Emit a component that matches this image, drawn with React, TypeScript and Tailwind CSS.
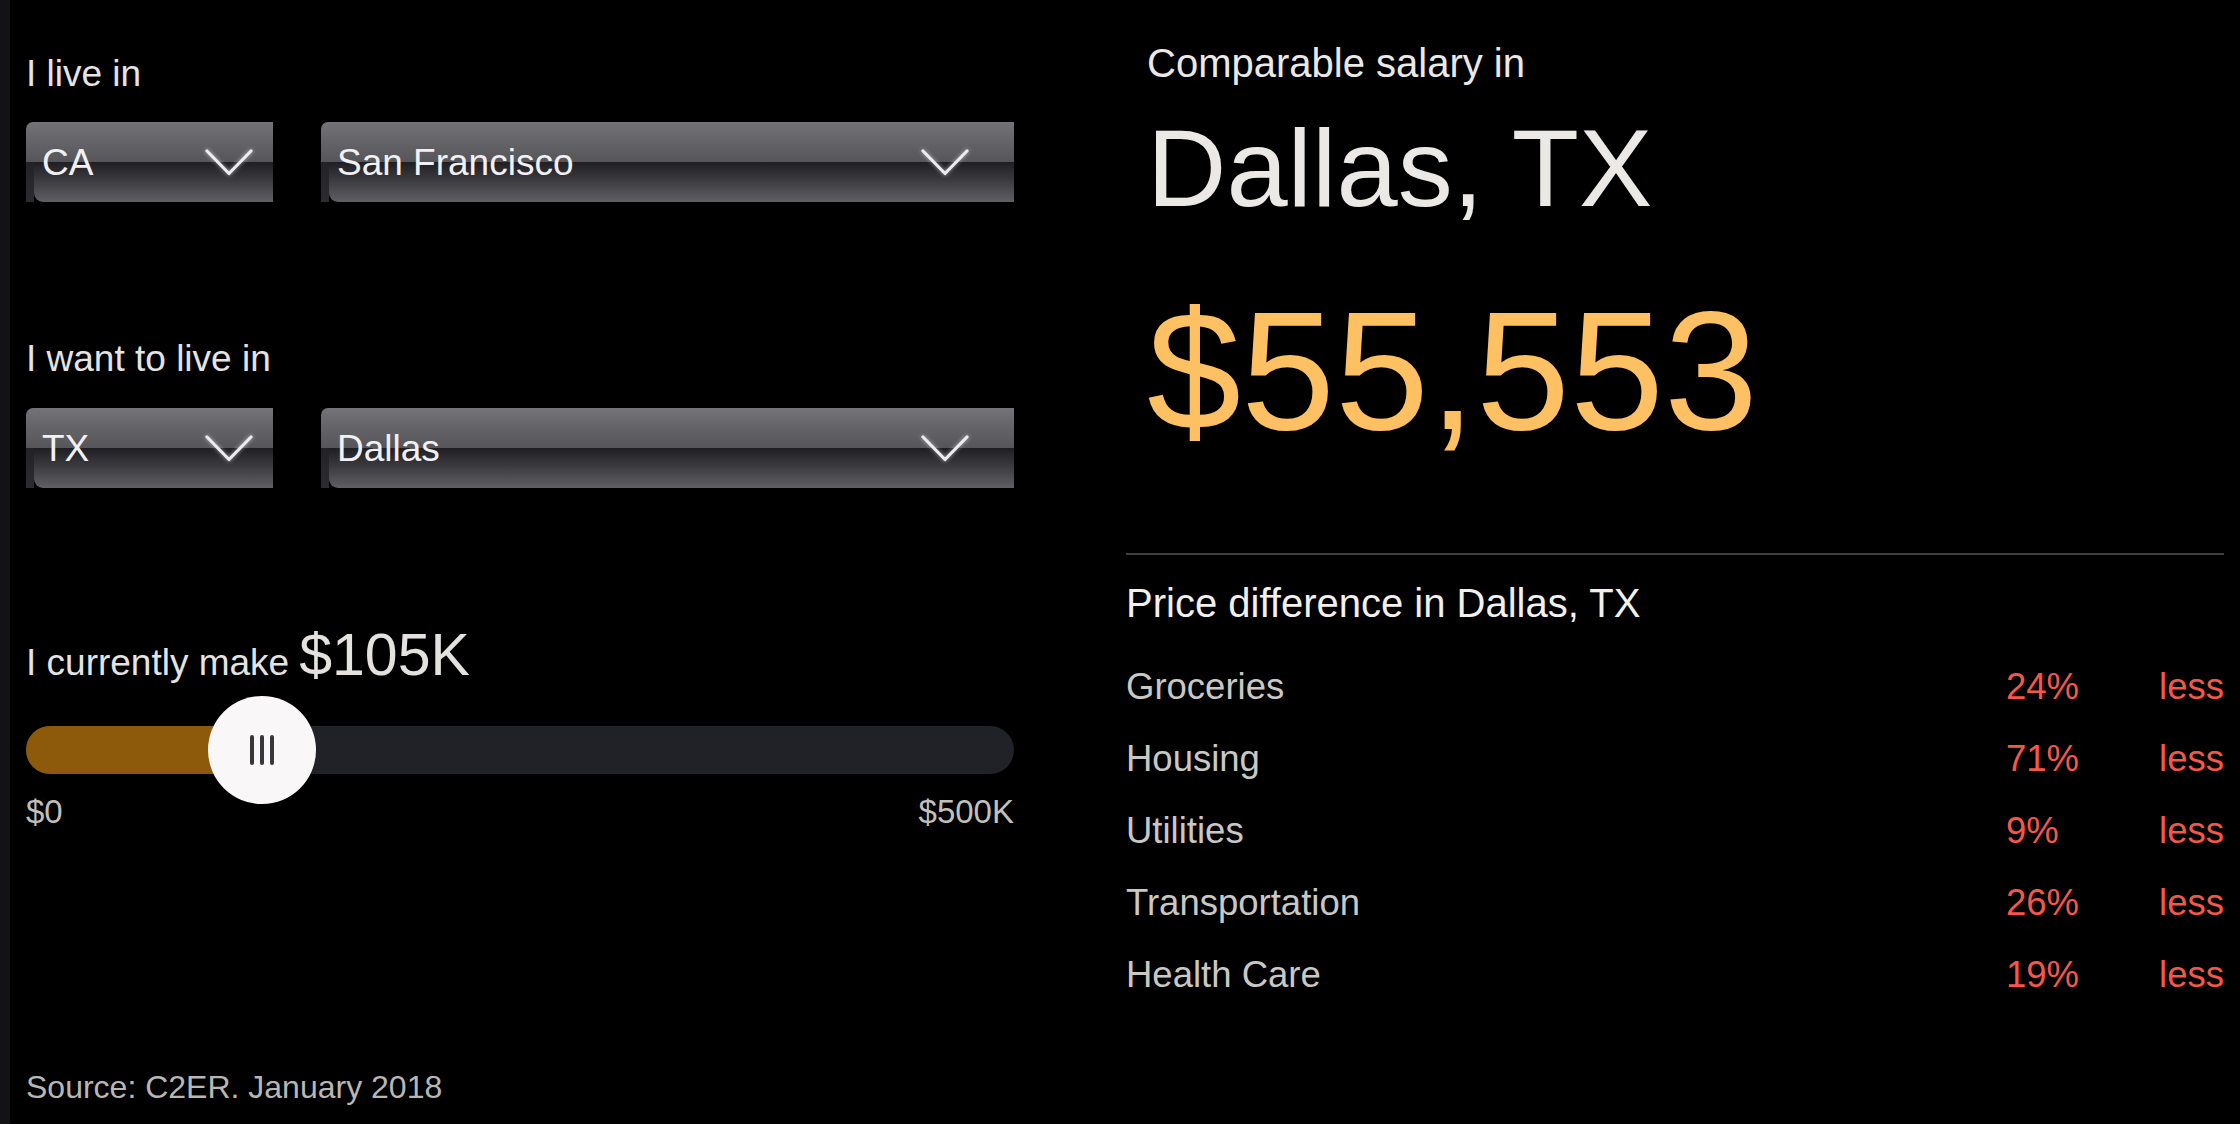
import React from "react";

type Row = { label: string; pct: string };

const ROWS: Row[] = [
  { label: "Groceries", pct: "24%" },
  { label: "Housing", pct: "71%" },
  { label: "Utilities", pct: "9%" },
  { label: "Transportation", pct: "26%" },
  { label: "Health Care", pct: "19%" },
];

const SALARY = 105;
const SALARY_MAX = 500;
const TRACK_W = 988;
const THUMB = 108;

function Chevron() {
  return (
    <svg
      width="48"
      height="27"
      viewBox="0 0 48 27"
      className="drop-shadow-[0_0_2px_rgba(255,255,255,0.55)]"
    >
      <polyline
        points="2,2 24,24.5 46,2"
        fill="none"
        stroke="#ecebee"
        strokeWidth="3.2"
        strokeLinecap="round"
        strokeLinejoin="round"
      />
    </svg>
  );
}

function Dropdown({
  value,
  width,
  chevronRight,
}: {
  value: string;
  width: string;
  chevronRight: string;
}) {
  return (
    <div className={`grid h-[80px] ${width}`}>
      {/* glossy two-tone background */}
      <div className="[grid-area:1/1] flex flex-col overflow-hidden rounded-tl-[7px]">
        <div className="h-[40px] bg-[linear-gradient(to_bottom,#747378,#67666b_40%,#56565a)]" />
        <div className="flex h-[40px]">
          <div className="w-[8px] bg-[linear-gradient(to_bottom,#232327,#2c2c30)]" />
          <div className="flex-1 rounded-bl-[9px] bg-[linear-gradient(to_bottom,#1f1f23,#3a3a3f_45%,#5f5f64)]" />
        </div>
      </div>
      <div className="[grid-area:1/1] flex items-center justify-between pl-[16px]">
        <span className="text-[37px] leading-none text-[#f1f0f2]">{value}</span>
        <span className={`flex ${chevronRight}`}>
          <Chevron />
        </span>
      </div>
    </div>
  );
}

function Slider() {
  const frac = SALARY / SALARY_MAX;
  const center = frac * (TRACK_W - THUMB) + THUMB / 2 - 3;
  return (
    <div className="relative h-[48px] w-full rounded-full bg-[#212227]">
      <div
        className="absolute left-0 top-0 h-full rounded-l-full bg-[#8c5a0a]"
        style={{ width: `${center}px` }}
      />
      <div
        className="absolute top-[-30px] flex h-[108px] w-[108px] items-center justify-center gap-[6px] rounded-full bg-[#f9f7f8]"
        style={{ left: `${center - THUMB / 2}px` }}
      >
        <span className="h-[30px] w-[4px] rounded-full bg-[#38383a]" />
        <span className="h-[30px] w-[4px] rounded-full bg-[#38383a]" />
        <span className="h-[30px] w-[4px] rounded-full bg-[#38383a]" />
      </div>
    </div>
  );
}

export default function App() {
  return (
    <div className="flex h-[1124px] w-[2240px] overflow-hidden bg-black font-['Liberation_Sans',Arial,sans-serif]">
      <div className="w-[10px] shrink-0 bg-[#131316]" />

      {/* inputs */}
      <div className="ml-[16px] flex w-[988px] shrink-0 flex-col">
        <div className="mt-[55px] text-[37px] leading-none text-[#e6e4e2]">I live in</div>
        <div className="mt-[30px] flex gap-[48px]">
          <Dropdown value="CA" width="w-[247px]" chevronRight="pr-[20px]" />
          <Dropdown value="San Francisco" width="w-[693px]" chevronRight="pr-[45px]" />
        </div>

        <div className="mt-[138px] text-[37px] leading-none text-[#e6e4e2]">I want to live in</div>
        <div className="mt-[31px] flex gap-[48px]">
          <Dropdown value="TX" width="w-[247px]" chevronRight="pr-[20px]" />
          <Dropdown value="Dallas" width="w-[693px]" chevronRight="pr-[45px]" />
        </div>

        <div className="mt-[138px] flex items-baseline gap-[10px] leading-none">
          <span className="text-[37px] text-[#e6e4e2]">I currently make</span>
          <span className="text-[59px] text-[#e4e2df]">${SALARY}K</span>
        </div>

        <div className="mt-[41px]">
          <Slider />
        </div>

        <div className="mt-[21px] flex justify-between text-[33px] leading-none text-[#c2c0bd]">
          <span>$0</span>
          <span>$500K</span>
        </div>

        <div className="mt-[243px] text-[32px] leading-none text-[#b9b7b4]">
          Source: C2ER. January 2018
        </div>
      </div>

      {/* results */}
      <div className="ml-[112px] flex w-[1098px] shrink-0 flex-col">
        <div className="flex flex-col pl-[21px]">
          <div className="mt-[43px] text-[40px] leading-none text-[#ebe9e6]">
            Comparable salary in
          </div>
          <div className="mt-[30px] text-[110px] leading-none text-[#ebe9e6]">Dallas, TX</div>
          <div className="mt-[63px] text-[169px] leading-none text-[#fdc163]">$55,553</div>
        </div>

        <div className="mt-[98px] h-[2px] w-full bg-[#3e3e3e]" />

        <div className="mt-[28px] text-[40px] leading-none text-[#f2f0ed]">
          Price difference in Dallas, TX
        </div>

        <div className="mt-[28px] flex flex-col">
          {ROWS.map((r) => (
            <div key={r.label} className="flex h-[72px] text-[36.5px] leading-[72px]">
              <span className="w-[880px] text-[#cac8c5]">{r.label}</span>
              <span className="flex-1 text-[#f5574b]">{r.pct}</span>
              <span className="text-right text-[#f5574b]">less</span>
            </div>
          ))}
        </div>
      </div>
    </div>
  );
}
